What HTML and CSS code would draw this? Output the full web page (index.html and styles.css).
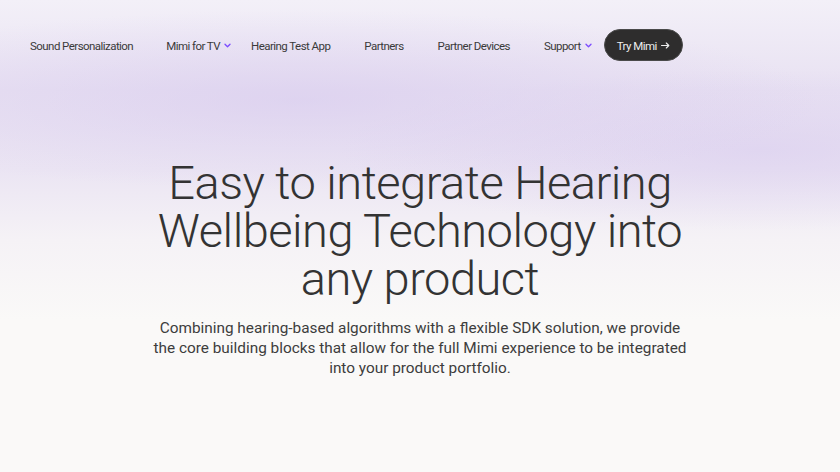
FILE: index.html
```html
<!DOCTYPE html>
<html lang="en">
<head>
<meta charset="utf-8">
<title>Mimi</title>
<link rel="stylesheet" href="styles.css">
</head>
<body>
<div class="page">
  <header class="nav">
    <a class="nav-item first">Sound Personalization</a>
    <a class="nav-item has-menu"><span>Mimi for TV</span><svg class="chev" viewBox="0 0 8 6" width="7" height="5"><path d="M1 1.5 L4 4.5 L7 1.5" fill="none" stroke="#7c4dff" stroke-width="1.6" stroke-linecap="round" stroke-linejoin="round"/></svg></a>
    <a class="nav-item">Hearing Test App</a>
    <a class="nav-item">Partners</a>
    <a class="nav-item">Partner Devices</a>
    <a class="nav-item has-menu last"><span>Support</span><svg class="chev" viewBox="0 0 8 6" width="7" height="5"><path d="M1 1.5 L4 4.5 L7 1.5" fill="none" stroke="#7c4dff" stroke-width="1.6" stroke-linecap="round" stroke-linejoin="round"/></svg></a>
    <a class="btn"><span>Try Mimi</span><svg class="arrow" viewBox="0 0 9 7" width="9" height="7"><path d="M0.5 3.5 H7.8 M5.3 1 L7.8 3.5 L5.3 6" fill="none" stroke="#ededed" stroke-width="1.1" stroke-linecap="round" stroke-linejoin="round"/></svg></a>
  </header>
  <main class="hero">
    <h1 class="title">Easy to integrate Hearing Wellbeing Technology into any product</h1>
    <p class="lead">Combining hearing-based algorithms with a flexible SDK solution, we provide<br>the core building blocks that allow for the full Mimi experience to be integrated<br>into your product portfolio.</p>
  </main>
</div>
</body>
</html>
```

FILE: styles.css
```css
html, body {
  margin: 0;
  padding: 0;
}
body {
  font-family: Roboto, "Noto Sans", sans-serif;
  color: #333;
  background: #faf9f8;
}
.page {
  width: 840px;
  height: 472px;
  overflow: hidden;
  background:
    radial-gradient(ellipse 520px 90px at 300px 100px, rgba(214, 200, 238, 0.55), rgba(214, 200, 238, 0) 100%),
    radial-gradient(ellipse 420px 80px at 760px 150px, rgba(214, 200, 238, 0.5), rgba(214, 200, 238, 0) 100%),
    linear-gradient(180deg, #f3f0f8 0px, #e8e1f2 90px, #ebe5f3 170px, #f5f2f6 240px, #faf9f8 320px, #faf9f8 472px);
}
.nav {
  display: flex;
  align-items: center;
  padding: 29px 0 0 30px;
  height: 32px;
}
.nav-item {
  display: flex;
  align-items: center;
  gap: 4px;
  margin-right: 34px;
  font-size: 11.5px;
  letter-spacing: -0.55px;
  color: #3a3a3a;
  white-space: nowrap;
  padding-top: 1px;
}
.nav-item.first {
  margin-right: 33px;
}
.nav-item.has-menu {
  margin-right: 20px;
}
.nav-item.last {
  margin-right: 12px;
}
.chev {
  display: block;
}
.btn {
  display: flex;
  align-items: center;
  justify-content: center;
  gap: 4px;
  box-sizing: border-box;
  width: 79px;
  height: 32px;
  border-radius: 16px;
  background: #2e2d2d;
  border: 1px solid #4a4a4a;
  color: #ededed;
  font-size: 11.5px;
  letter-spacing: -0.55px;
  padding-top: 1px;
}
.arrow {
  display: block;
}
.hero {
  display: flex;
  flex-direction: column;
  align-items: center;
  padding-top: 98px;
}
.title {
  margin: 0;
  width: 560px;
  text-align: center;
  font-size: 47px;
  font-weight: 300;
  line-height: 48px;
  letter-spacing: -0.5px;
  color: #333;
}
.lead {
  margin: 15px 0 0;
  width: 600px;
  text-align: center;
  font-size: 15.35px;
  line-height: 20px;
  letter-spacing: 0;
  color: #3d3d3d;
}
```
